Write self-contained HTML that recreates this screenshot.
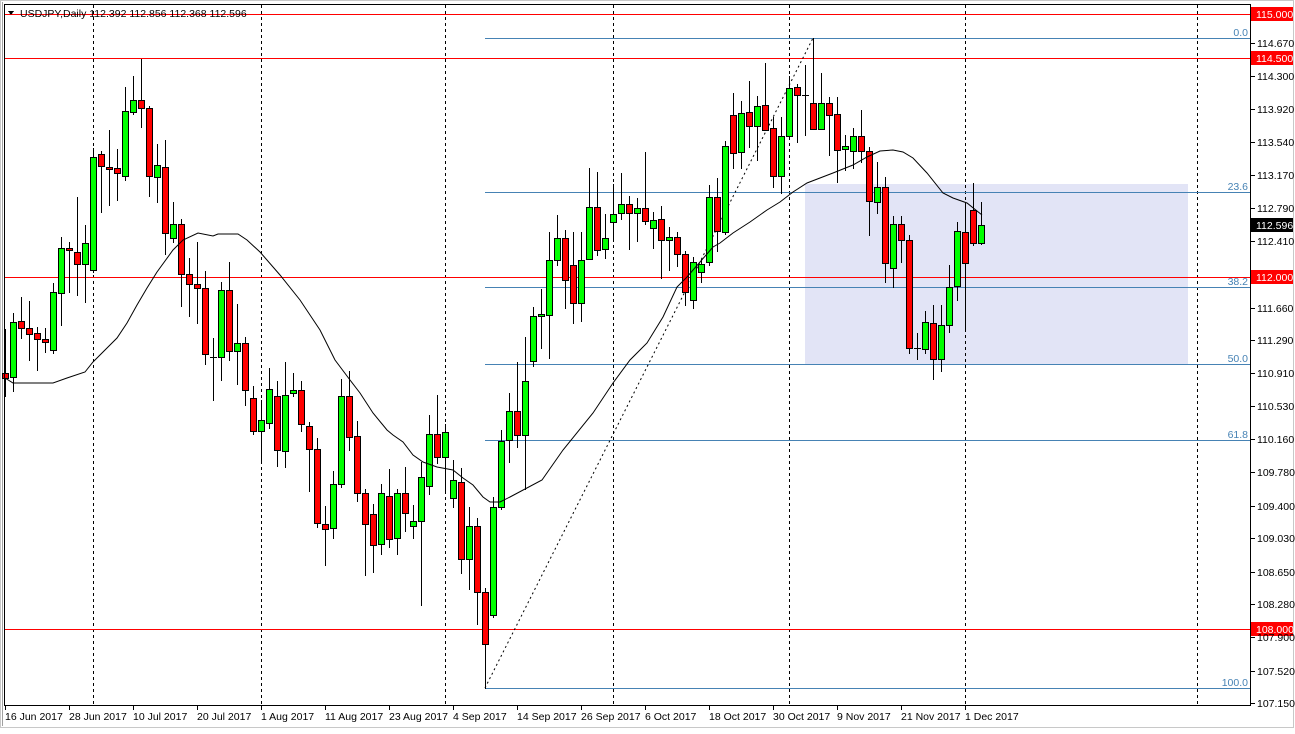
<!DOCTYPE html>
<html><head><meta charset="utf-8"><style>
html,body{margin:0;padding:0;background:#fff;}
body{width:1295px;height:729px;overflow:hidden;position:relative;font-family:"Liberation Sans",sans-serif;}
svg text{font-family:"Liberation Sans",sans-serif;font-size:10.5px;}
</style></head><body>
<svg id="c" width="1295" height="729" viewBox="0 0 1295 729" xmlns="http://www.w3.org/2000/svg" shape-rendering="crispEdges">
<rect x="0" y="0" width="1295" height="729" fill="#fff"/>
<rect x="0.5" y="0.5" width="1293" height="727" fill="none" stroke="#c8c8c8"/>
<line x1="2.5" y1="2" x2="2.5" y2="726" stroke="#a0a0a0"/>
<rect x="805" y="184" width="383" height="180" fill="#e2e4f6"/>
<g stroke="#000" stroke-dasharray="3,3">
<line x1="93.5" y1="5" x2="93.5" y2="705"/><line x1="261.5" y1="5" x2="261.5" y2="705"/>
<line x1="445.5" y1="5" x2="445.5" y2="705"/><line x1="613.5" y1="5" x2="613.5" y2="705"/>
<line x1="789.5" y1="5" x2="789.5" y2="705"/><line x1="965.5" y1="5" x2="965.5" y2="705"/>
<line x1="1197.5" y1="5" x2="1197.5" y2="705"/>
</g>
<g stroke="#ff0000">
<line x1="5" y1="14.5" x2="1250" y2="14.5"/><line x1="5" y1="58.5" x2="1250" y2="58.5"/>
<line x1="5" y1="277.5" x2="1250" y2="277.5"/><line x1="5" y1="629.5" x2="1250" y2="629.5"/>
</g>
<g stroke="#4682b4">
<line x1="485" y1="38.5" x2="1250" y2="38.5"/><line x1="485" y1="192.5" x2="1250" y2="192.5"/>
<line x1="485" y1="287.5" x2="1250" y2="287.5"/><line x1="485" y1="364.5" x2="1250" y2="364.5"/>
<line x1="485" y1="440.5" x2="1250" y2="440.5"/><line x1="485" y1="688.5" x2="1250" y2="688.5"/>
</g>
<g fill="#4682b4" text-anchor="end">
<text x="1248" y="36">0.0</text><text x="1248" y="190">23.6</text><text x="1248" y="285">38.2</text>
<text x="1248" y="362">50.0</text><text x="1248" y="438">61.8</text><text x="1248" y="686">100.0</text>
</g>
<line x1="485" y1="688" x2="813" y2="38" stroke="#000" stroke-dasharray="2,3" shape-rendering="auto"/>
<g id="cand"></g>
<polyline id="ma" fill="none" stroke="#000" stroke-width="1" shape-rendering="auto" points=""/>
<rect x="4.5" y="4.5" width="1246" height="701" fill="none" stroke="#000"/>
<g id="ticks" stroke="#000"></g>
<g fill="#000">
<text x="20" y="17" font-size="10">USDJPY,Daily  112.392 112.856 112.368 112.596</text>
</g>
<path d="M8 11 L14 11 L11 15 Z" fill="#000"/>
<rect x="1251" y="7" width="42" height="14" fill="#ff0000"/><text x="1256" y="18" fill="#fff">115.000</text>
<rect x="1251" y="51" width="42" height="14" fill="#ff0000"/><text x="1256" y="62" fill="#fff">114.500</text>
<rect x="1251" y="270" width="42" height="14" fill="#ff0000"/><text x="1256" y="281" fill="#fff">112.000</text>
<rect x="1251" y="622" width="42" height="14" fill="#ff0000"/><text x="1256" y="633" fill="#fff">108.000</text>
<rect x="1251" y="218" width="42" height="14" fill="#000"/><text x="1256" y="229" fill="#fff">112.596</text>
<g fill="#000">
<text x="1257" y="47">114.670</text><text x="1257" y="80">114.300</text><text x="1257" y="113">113.920</text>
<text x="1257" y="146">113.540</text><text x="1257" y="179">113.170</text><text x="1257" y="212">112.790</text>
<text x="1257" y="245">112.410</text><text x="1257" y="312">111.660</text><text x="1257" y="344">111.290</text>
<text x="1257" y="377">110.910</text><text x="1257" y="410">110.530</text><text x="1257" y="443">110.160</text>
<text x="1257" y="476">109.780</text><text x="1257" y="510">109.400</text><text x="1257" y="542">109.030</text>
<text x="1257" y="576">108.650</text><text x="1257" y="608">108.280</text><text x="1257" y="641">107.900</text>
<text x="1257" y="675">107.520</text><text x="1257" y="707">107.150</text>
</g>
<g fill="#000">
<text x="5" y="720">16 Jun 2017</text><text x="69" y="720">28 Jun 2017</text><text x="133" y="720">10 Jul 2017</text>
<text x="197" y="720">20 Jul 2017</text><text x="261" y="720">1 Aug 2017</text><text x="325" y="720">11 Aug 2017</text>
<text x="389" y="720">23 Aug 2017</text><text x="453" y="720">4 Sep 2017</text><text x="517" y="720">14 Sep 2017</text>
<text x="581" y="720">26 Sep 2017</text><text x="645" y="720">6 Oct 2017</text><text x="709" y="720">18 Oct 2017</text>
<text x="773" y="720">30 Oct 2017</text><text x="837" y="720">9 Nov 2017</text><text x="901" y="720">21 Nov 2017</text>
<text x="965" y="720">1 Dec 2017</text>
</g>
</svg>
<script>
// [wickTop, wickBot, bodyTop, bodyBot, g/r/d]
var D=[
[329,397,373,378,'r'],[313,392,322,377,'g'],[297,339,321,328,'r'],[301,361,328,334,'r'],[327,371,333,339,'r'],
[328,353,339,342,'r'],[283,354,292,350,'g'],[237,326,248,293,'g'],[242,293,248,250,'r'],[197,296,252,264,'r'],
[225,303,243,264,'g'],[148,273,157,270,'g'],[151,213,154,166,'r'],[130,206,167,169,'r'],[149,201,168,173,'r'],
[87,181,111,176,'g'],[76,115,100,112,'g'],[59,128,100,108,'r'],[106,197,108,176,'r'],[144,203,165,177,'g'],
[140,255,167,233,'r'],[202,243,224,238,'g'],[219,307,224,274,'r'],[258,317,274,284,'r'],[242,324,284,288,'r'],
[271,365,288,354,'r'],[338,401,357,357,'d'],[282,381,290,357,'g'],[262,361,290,351,'r'],[304,385,343,351,'g'],
[337,406,343,390,'r'],[386,435,398,431,'r'],[400,463,420,431,'g'],[368,429,389,423,'g'],[381,467,396,450,'r'],
[362,468,395,451,'g'],[373,397,390,393,'g'],[381,432,390,424,'r'],[422,492,426,449,'r'],[438,528,449,523,'r'],
[506,566,524,529,'r'],[471,539,484,528,'g'],[379,488,396,484,'g'],[371,451,396,437,'r'],[421,502,436,493,'r'],
[489,576,493,524,'r'],[504,573,514,545,'r'],[484,555,493,544,'g'],[469,548,496,539,'r'],[489,555,493,538,'g'],
[467,532,493,513,'r'],[505,539,521,526,'g'],[462,606,477,521,'g'],[415,495,434,486,'g'],[395,464,434,457,'r'],
[424,492,432,457,'g'],[460,508,480,498,'g'],[468,574,482,559,'r'],[507,590,526,559,'g'],[518,625,526,592,'r'],
[588,689,592,644,'r'],[497,618,507,615,'g'],[430,510,441,507,'g'],[393,463,411,440,'g'],[362,448,411,435,'r'],
[337,490,381,435,'g'],[307,367,316,361,'g'],[289,349,314,316,'g'],[232,359,260,315,'g'],[215,266,238,260,'g'],
[230,309,238,280,'r'],[232,324,265,303,'r'],[232,322,260,303,'g'],[168,260,207,259,'g'],[172,256,207,250,'r'],
[214,259,238,249,'g'],[184,240,214,222,'g'],[173,220,204,213,'g'],[196,250,204,213,'r'],[198,242,208,213,'g'],
[152,225,208,221,'r'],[212,249,220,228,'g'],[206,279,219,240,'r'],[227,271,237,240,'g'],[232,267,237,254,'r'],
[251,306,254,292,'r'],[257,309,262,300,'g'],[259,283,264,272,'g'],[185,266,197,262,'g'],[178,252,197,231,'r'],
[141,235,146,232,'g'],[93,169,115,153,'r'],[101,169,113,152,'g'],[81,148,112,126,'r'],[96,161,106,126,'g'],
[63,130,105,130,'r'],[117,188,128,176,'r'],[117,194,136,176,'g'],[76,136,88,136,'g'],[84,143,87,95,'r'],
[65,136,95,96,'d'],[38,129,103,129,'r'],[73,129,103,129,'g'],[97,156,103,115,'r'],[97,183,114,150,'r'],
[135,171,146,149,'g'],[128,169,136,151,'g'],[110,163,136,151,'r'],[147,236,151,201,'r'],[162,214,187,202,'g'],
[177,283,187,263,'r'],[216,288,224,268,'g'],[216,263,224,240,'r'],[235,354,240,348,'r'],[333,360,348,348,'d'],
[311,354,322,349,'g'],[305,380,323,359,'r'],[305,372,325,359,'g'],[265,333,287,325,'g'],[222,301,231,286,'g'],
[203,329,232,263,'r'],[183,246,210,243,'r'],[202,245,225,243,'g']];
var ns="http://www.w3.org/2000/svg",g=document.getElementById('cand'),h='';
D.forEach(function(d,i){var x=5+8*i;
h+='<line x1="'+(x+0.5)+'" y1="'+d[0]+'" x2="'+(x+0.5)+'" y2="'+d[1]+'" stroke="#000"/>';
if(d[4]=='d'){h+='<line x1="'+(x-3)+'" y1="'+(d[2]+0.5)+'" x2="'+(x+4)+'" y2="'+(d[2]+0.5)+'" stroke="#000"/>';}
else{var hh=Math.max(2,d[3]-d[2]);h+='<rect x="'+(x-2.5)+'" y="'+(d[2]+0.5)+'" width="6" height="'+hh+'" fill="'+(d[4]=='g'?'#00ff00':'#ff0000')+'" stroke="#000"/>';}
});
g.innerHTML=h;
document.getElementById('ma').setAttribute('points',"5,378 13,383 53,383 67,378 85,372 93,362 107,348 117,338 127,323 137,305 147,288 157,272 173,250 183,240 198,233 213,236 218,234 238,234 247,240 260,252 280,275 300,300 320,330 335,360 350,380 360,393 373,413 387,430 393,435 403,442 413,455 423,462 437,467 453,470 463,478 473,485 483,497 490,502 500,502 510,497 542,480 563,450 593,413 613,383 630,360 647,343 663,317 677,287 687,277 713,247 720,243 733,233 750,222 767,210 780,202 793,192 807,183 833,173 853,165 867,157 880,151 893,150 903,152 913,158 927,173 943,193 953,198 967,203 982,215");
var t='',ys=[43,76,109,142,175,208,241,308,340,373,406,439,472,506,538,572,604,637,671,703];
ys.forEach(function(y){t+='<line x1="1251" y1="'+(y+0.5)+'" x2="1255" y2="'+(y+0.5)+'"/>';});
[5,69,133,197,261,325,389,453,517,581,645,709,773,837,901,965].forEach(function(x){t+='<line x1="'+(x+0.5)+'" y1="706" x2="'+(x+0.5)+'" y2="710"/>';});
document.getElementById('ticks').innerHTML=t;
</script>
</body></html>
